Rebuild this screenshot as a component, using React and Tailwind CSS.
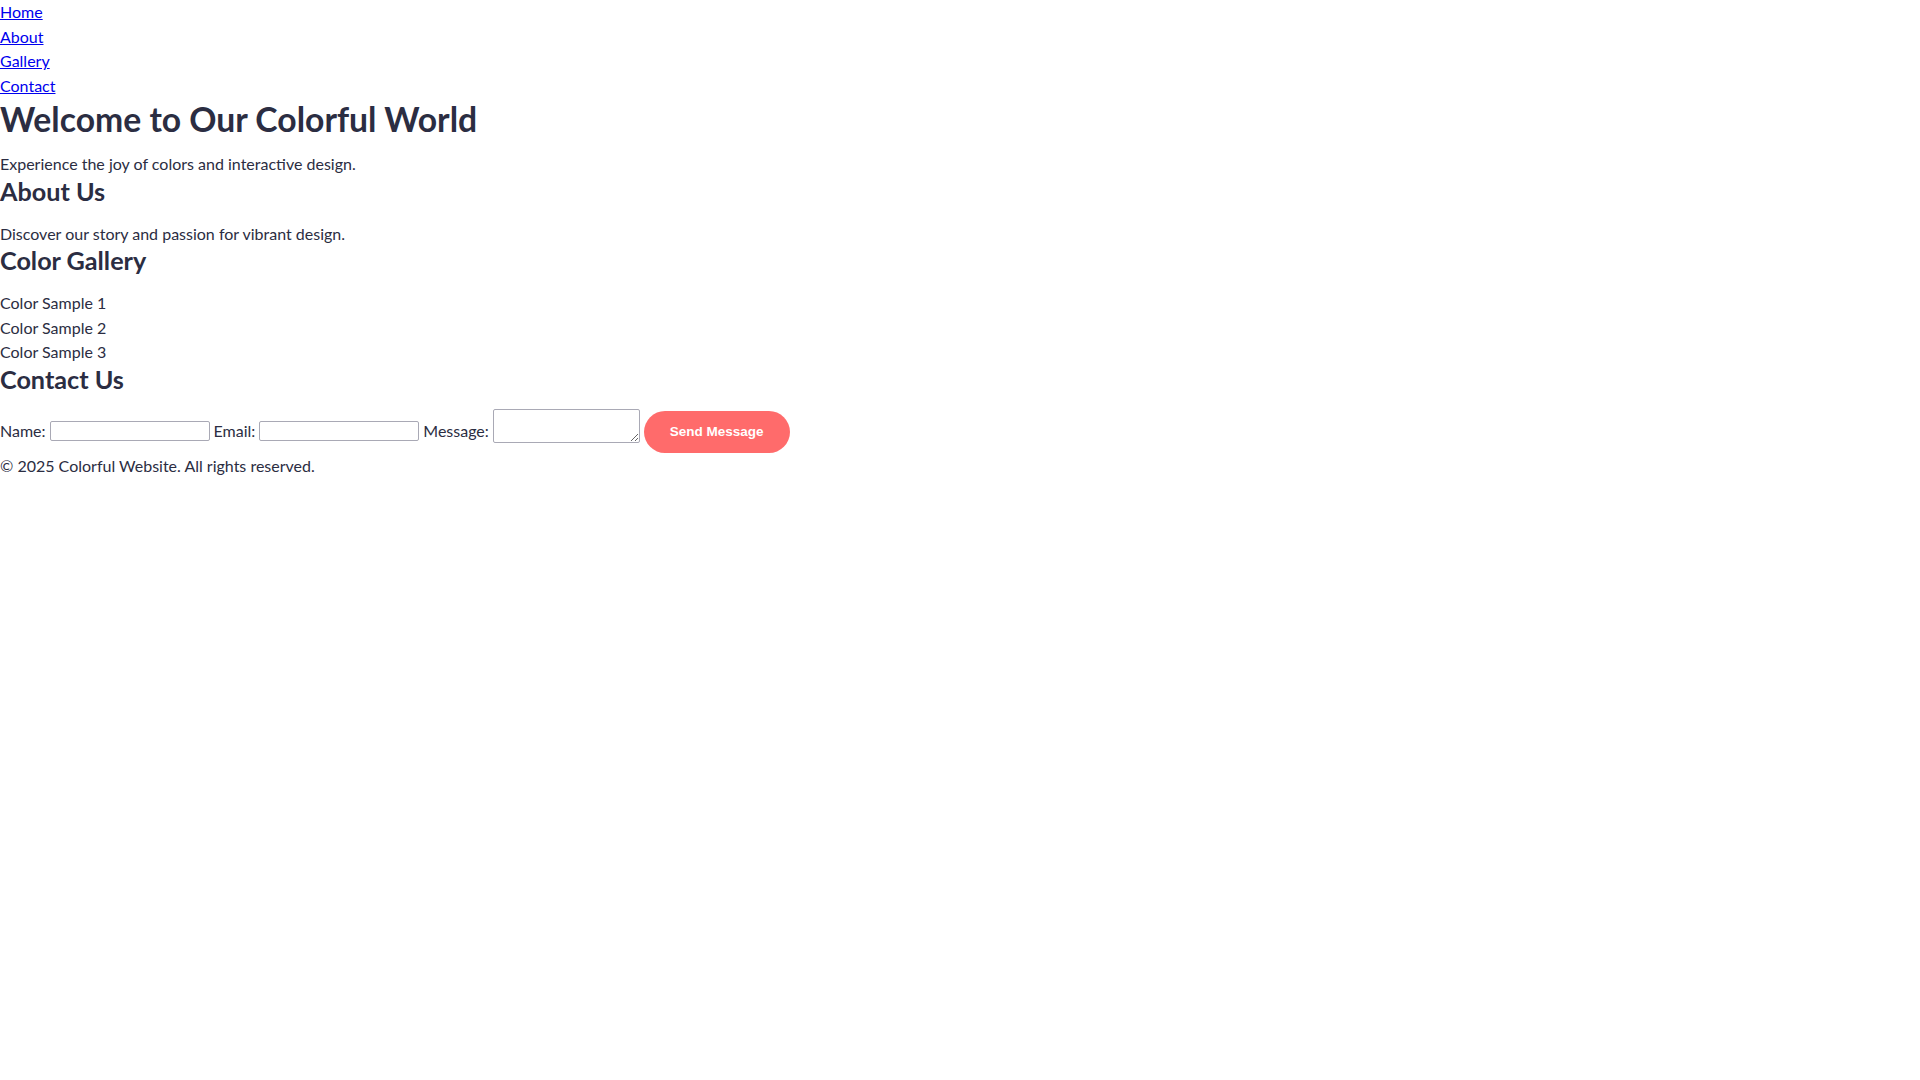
export default function App() {
  const links = [
    { href: "#home", label: "Home" },
    { href: "#about", label: "About" },
    { href: "#gallery", label: "Gallery" },
    { href: "#contact", label: "Contact" },
  ];

  return (
    <div className="min-h-screen bg-white font-['Lato',sans-serif] text-[16px] leading-[24.5px] text-[#2b2d42]">
      <header>
        <nav>
          <ul>
            {links.map((link) => (
              <li key={link.href}>
                <a href={link.href} className="text-[#0000ee] underline">
                  {link.label}
                </a>
              </li>
            ))}
          </ul>
        </nav>
      </header>

      <section id="home">
        <h1 className="text-[33.7px] font-bold leading-[42px]">
          Welcome to Our Colorful World
        </h1>
        <p className="mt-[12px]">Experience the joy of colors and interactive design.</p>
      </section>

      <section id="about">
        <h2 className="text-[25.2px] font-bold leading-[29px]">About Us</h2>
        <p className="mt-[16px]">Discover our story and passion for vibrant design.</p>
      </section>

      <section id="gallery">
        <h2 className="text-[25.2px] font-bold leading-[29px]">Color Gallery</h2>
        <div className="mt-[16px]">
          <div>Color Sample 1</div>
          <div>Color Sample 2</div>
          <div>Color Sample 3</div>
        </div>
      </section>

      <section id="contact">
        <h2 className="text-[25.2px] font-bold leading-[29px]">Contact Us</h2>
        <form
          className="mt-[15px] flex h-[45px] items-center gap-[4px]"
          onSubmit={(e) => e.preventDefault()}
        >
          <label htmlFor="name">Name:</label>
          <input
            id="name"
            type="text"
            className="h-[20px] w-[160px] rounded-[2px] border border-[#a9a9b5] bg-white"
          />
          <label htmlFor="email">Email:</label>
          <input
            id="email"
            type="email"
            className="h-[20px] w-[160px] rounded-[2px] border border-[#a9a9b5] bg-white"
          />
          <label htmlFor="message">Message:</label>
          <textarea
            id="message"
            className="h-[34px] w-[147px] self-start rounded-[2px] border border-[#a9a9b5] bg-white"
          ></textarea>
          <button
            type="submit"
            className="mt-[2px] h-[42px] rounded-full bg-[#ff6b6b] px-[26px] font-['Liberation_Sans',Arial,sans-serif] text-[13.5px] font-bold text-white"
          >
            Send Message
          </button>
        </form>
      </section>

      <footer>
        <p>© 2025 Colorful Website. All rights reserved.</p>
      </footer>
    </div>
  );
}
